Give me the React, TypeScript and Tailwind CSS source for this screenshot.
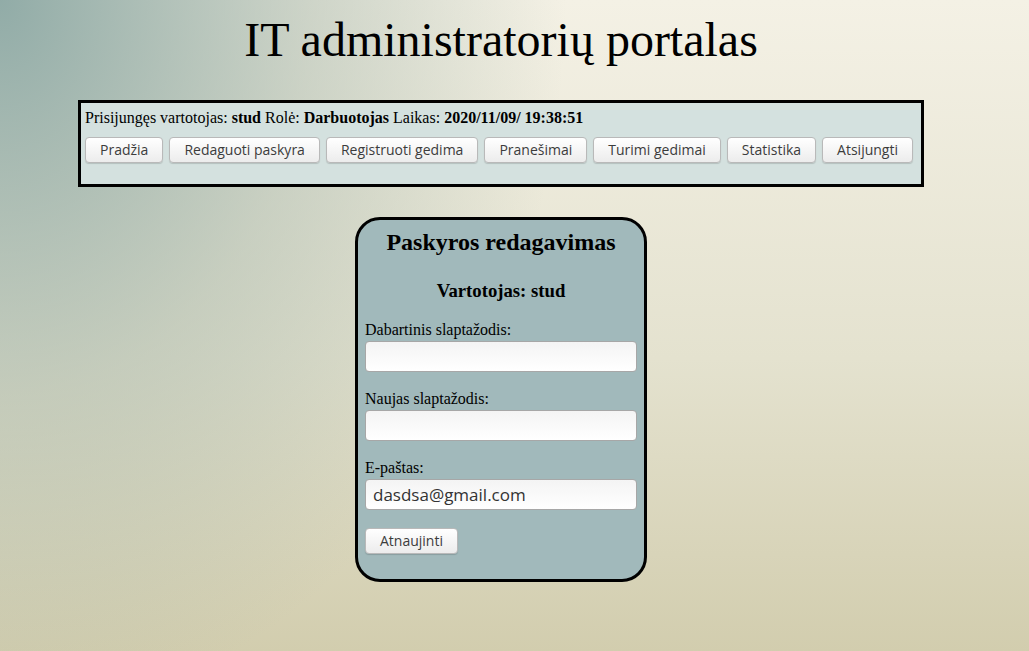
import React from 'react';

const NAV = ['Pradžia', 'Redaguoti paskyra', 'Registruoti gedima', 'Pranešimai', 'Turimi gedimai', 'Statistika', 'Atsijungti'];

const btn =
  "h-[26px] rounded-[4px] border border-[#b9b9b9] bg-[linear-gradient(#ffffff,#ececec)] px-[14px] text-[14px] leading-none text-[#3c3c3c] shadow-[0_1px_1px_rgba(0,0,0,0.15)] font-['Open_Sans',sans-serif]";

const input =
  "block h-[31px] w-[272px] rounded-[4px] border border-[#a7a7a7] bg-[linear-gradient(#f4f4f4,#ffffff)] px-[7px] text-[17px] text-[#333] font-['Open_Sans',sans-serif] outline-none";

function Field({ label, type, value }: { label: string; type: string; value?: string }) {
  return (
    <div className="mb-[18px]">
      <label className="block text-[16px] leading-[18px] mb-[2px]">{label}</label>
      <input type={type} defaultValue={value} className={input} />
    </div>
  );
}

export default function App() {
  return (
    <div className="min-h-[651px] w-full bg-[radial-gradient(ellipse_55%_110%_at_0%_0%,rgba(140,168,164,0.95),rgba(160,178,166,0.45)_55%,rgba(170,180,160,0)_100%),linear-gradient(#f4f1e5,#e4e2cf_55%,#d2cdae)] font-['Liberation_Serif',serif] text-black">
      <div className="w-[1002px] pt-[12px] pb-[70px]">
        <h1 className="text-center text-[48px] leading-[56px] font-normal">IT administratorių portalas</h1>

        <div className="mx-auto mt-[32px] w-[846px] h-[87px] border-[3px] border-black bg-[#d4e1df] px-[4px] pt-[6px]">
          <div className="text-[16px] leading-[18px]">
            Prisijungęs vartotojas: <b>stud</b> Rolė: <b>Darbuotojas</b> Laikas: <b>2020/11/09/ 19:38:51</b>
          </div>
          <div className="mt-[10px] flex gap-[6px]">
            {NAV.map((n) => (
              <button key={n} className={btn}>{n}</button>
            ))}
          </div>
        </div>

        <div className="mx-auto mt-[30px] w-[292px] rounded-[25px] border-[3px] border-black bg-[#a1b9bb] px-[7px] pt-[8px] pb-[25px]">
          <h2 className="text-center text-[24px] leading-[28px] font-bold">Paskyros redagavimas</h2>
          <h3 className="mt-[24px] text-center text-[18.72px] leading-[22px] font-bold">Vartotojas: stud</h3>
          <div className="mt-[19px]">
            <Field label="Dabartinis slaptažodis:" type="password" />
            <Field label="Naujas slaptažodis:" type="password" />
            <Field label="E-paštas:" type="text" value="dasdsa@gmail.com" />
          </div>
          <button className={btn}>Atnaujinti</button>
        </div>
      </div>
    </div>
  );
}
